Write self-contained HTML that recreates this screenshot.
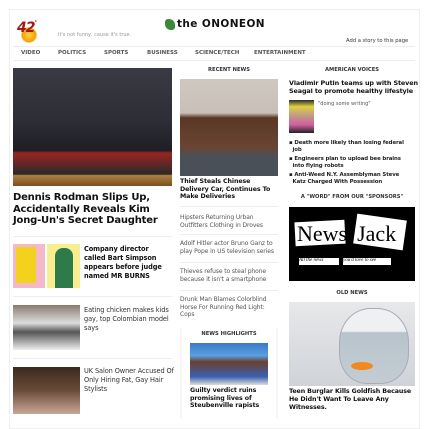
<!DOCTYPE html>
<html><head><meta charset="utf-8"><style>
*{margin:0;padding:0;box-sizing:border-box}
body{width:428px;height:414px;overflow:hidden;background:#fff;font-family:"DejaVu Sans","Liberation Sans",sans-serif;color:#222;position:relative}
.a{position:absolute}
.page{left:9px;top:9px;width:411px;height:420px;border:1px solid #eee}
.nav{font-size:5.5px;font-weight:bold;color:#555;top:50px}
.hd{font-size:5.2px;font-weight:bold;color:#333;text-align:center}
.b{font-weight:bold}
.hr{height:1px;background:#eee}
.sm{font-size:6.6px;line-height:9px;font-weight:bold;letter-spacing:-.1px}
.lt{font-size:6px;line-height:7.6px;color:#555;letter-spacing:-.1px}
</style></head><body>
<div class="a page"></div>
<div class="a" style="left:21px;top:27px;width:16px;height:16px;border-radius:50%;background:radial-gradient(circle,#ffd24a,#f5a000 60%,#fff0 75%)"></div>
<div class="a b" style="left:17px;top:20px;font-size:14px;font-style:italic;color:#a01818;letter-spacing:-1px">42<span style="font-size:5px;vertical-align:top">°</span></div>
<div class="a" style="left:58px;top:32px;font-size:5px;color:#999">It's not funny, cause it's true.</div>
<div class="a" style="left:165px;top:19px;width:10px;height:11px;background:#3a8a3a;border-radius:3px 6px 3px 6px"></div>
<div class="a b" style="left:177px;top:18px;font-size:10.5px;color:#111;letter-spacing:.4px">the ONONEON</div>
<div class="a" style="left:346px;top:38px;font-size:5.2px;color:#333">Add a story to this page</div>
<div class="a hr" style="left:13px;top:46px;width:402px"></div>
<div class="a hr" style="left:13px;top:60px;width:402px"></div>
<div class="a nav" style="left:21px">VIDEO</div>
<div class="a nav" style="left:58px">POLITICS</div>
<div class="a nav" style="left:104px">SPORTS</div>
<div class="a nav" style="left:147px">BUSINESS</div>
<div class="a nav" style="left:195px">SCIENCE/TECH</div>
<div class="a nav" style="left:254px">ENTERTAINMENT</div>
<!-- left -->
<div class="a" style="left:13px;top:68px;width:159px;height:118px;background:linear-gradient(#3a3a44 0%,#2d2d36 45%,#1e1e24 70%,#9b2420 72%,#2a2a2a 90%,#b08040 91%,#7a5020 100%)"></div>
<div class="a b" style="left:13px;top:192px;width:165px;font-size:10px;line-height:11.5px;color:#111;letter-spacing:-.2px">Dennis Rodman Slips Up, Accidentally Reveals Kim Jong-Un's Secret Daughter</div>
<div class="a hr" style="left:13px;top:236px;width:159px"></div>
<div class="a" style="left:13px;top:244px;width:32px;height:44px;background:#f4b8c8"><div class="a" style="left:3px;top:3px;width:20px;height:36px;background:#f2d21c"></div></div>
<div class="a" style="left:47px;top:244px;width:33px;height:44px;background:#f6ee90"><div class="a" style="left:8px;top:4px;width:18px;height:40px;background:#2f7a4a;border-radius:8px 8px 0 0"></div></div>
<div class="a sm" style="left:84px;top:245px;width:86px;color:#111">Company director called Bart Simpson appears before judge named MR BURNS</div>
<div class="a hr" style="left:13px;top:296px;width:159px"></div>
<div class="a" style="left:13px;top:305px;width:67px;height:45px;background:linear-gradient(#8a7a70,#ddd 40%,#555 60%,#eee)"></div>
<div class="a sm" style="left:84px;top:306px;width:92px;font-weight:normal;color:#333">Eating chicken makes kids gay, top Colombian model says</div>
<div class="a hr" style="left:13px;top:358px;width:159px"></div>
<div class="a" style="left:13px;top:367px;width:67px;height:47px;background:linear-gradient(#3a2a20,#6a4a38 50%,#c9a898)"></div>
<div class="a sm" style="left:84px;top:367px;width:92px;font-weight:normal;color:#333">UK Salon Owner Accused Of Only Hiring Fat, Gay Hair Stylists</div>
<!-- middle -->
<div class="a hd" style="left:180px;top:67px;width:98px">RECENT NEWS</div>
<div class="a" style="left:180px;top:79px;width:98px;height:97px;background:linear-gradient(#cfc8c0 0%,#c8bfb8 35%,#5a3826 40%,#6a4432 70%,#4a5058 80%)"></div>
<div class="a sm" style="left:180px;top:178px;width:100px;font-size:6.3px;line-height:7.6px;color:#111">Thief Steals Chinese Delivery Car, Continues To Make Deliveries</div>
<div class="a hr" style="left:180px;top:206px;width:98px"></div>
<div class="a lt" style="left:180px;top:214px;width:100px">Hipsters Returning Urban Outfitters Clothing in Droves</div>
<div class="a hr" style="left:180px;top:234px;width:98px"></div>
<div class="a lt" style="left:180px;top:240px;width:100px">Adolf Hitler actor Bruno Ganz to play Pope in US television series</div>
<div class="a hr" style="left:180px;top:262px;width:98px"></div>
<div class="a lt" style="left:180px;top:268px;width:100px">Thieves refuse to steal phone because it isn't a smartphone</div>
<div class="a hr" style="left:180px;top:290px;width:98px"></div>
<div class="a lt" style="left:180px;top:296px;width:100px">Drunk Man Blames Colorblind Horse For Running Red Light: Cops</div>
<div class="a" style="left:180px;top:328px;width:98px;height:90px;background:#f6f6f6"><div class="a" style="left:2px;top:0;width:94px;height:90px;background:#fff"></div></div>
<div class="a hd" style="left:180px;top:331px;width:98px">NEWS HIGHLIGHTS</div>
<div class="a" style="left:190px;top:343px;width:78px;height:42px;background:linear-gradient(#3a78c8,#5aa0e0 30%,#6a4030 45%,#3a60b0 80%,#ddd)"></div>
<div class="a sm" style="left:190px;top:387px;width:84px;font-size:6.3px;line-height:7.6px;color:#111">Guilty verdict ruins promising lives of Steubenville rapists</div>
<!-- right -->
<div class="a hd" style="left:289px;top:67px;width:126px">AMERICAN VOICES</div>
<div class="a sm" style="left:289px;top:79px;width:130px;font-size:6.4px;line-height:8px;color:#111">Vladimir Putin teams up with Steven Seagal to promote healthy lifestyle</div>
<div class="a" style="left:289px;top:100px;width:25px;height:33px;background:linear-gradient(#2a2a2a,#e0d040 20%,#c0a080 45%,#d060a0 75%,#222)"></div>
<div class="a" style="left:318px;top:101px;font-size:5px;color:#555">"doing some writing"</div>
<div class="a sm" style="left:289px;top:140px;width:130px;font-size:5.4px;line-height:7px;color:#222">▪ Death more likely than losing federal<br>&nbsp;&nbsp;job</div>
<div class="a sm" style="left:289px;top:156px;width:130px;font-size:5.4px;line-height:7px;color:#222">▪ Engineers plan to upload bee brains<br>&nbsp;&nbsp;into flying robots</div>
<div class="a sm" style="left:289px;top:172px;width:130px;font-size:5.4px;line-height:7px;color:#222">▪ Anti-Weed N.Y. Assemblyman Steve<br>&nbsp;&nbsp;Katz Charged With Possession</div>
<div class="a hd" style="left:289px;top:194px;width:126px">A "WORD" FROM OUR "SPONSORS"</div>
<div class="a" style="left:289px;top:207px;width:126px;height:74px;background:#000;overflow:hidden">
<div class="a" style="left:6px;top:14px;width:50px;height:24px;background:#fff;transform:rotate(-3deg)"></div>
<div class="a" style="left:66px;top:10px;width:50px;height:30px;background:#fff;transform:rotate(8deg)"></div>
<div class="a" style="left:8px;top:14px;font-family:'Liberation Serif',serif;font-size:22px;color:#000">News<span style="margin-left:10px">Jack</span></div>
<div class="a" style="left:10px;top:51px;width:40px;height:7px;background:#fff;font-size:5px;font-style:italic;font-family:'Liberation Serif',serif;color:#000">All the news</div>
<div class="a" style="left:54px;top:51px;width:48px;height:7px;background:#fff;font-size:5px;font-style:italic;font-family:'Liberation Serif',serif;color:#000">you'd love to see</div>
</div>
<div class="a hd" style="left:289px;top:290px;width:126px">OLD NEWS</div>
<div class="a" style="left:289px;top:302px;width:126px;height:84px;background:linear-gradient(#e8e8ea,#cfd3d8);overflow:hidden"><div class="a" style="left:50px;top:6px;width:70px;height:76px;border-radius:45% 45% 40% 40%;border:1px solid #aab;background:linear-gradient(#eef0f2 30%,#b8c4cc 32%,#c4ccd2)"></div><div class="a" style="left:62px;top:60px;width:22px;height:8px;background:#f08a20;border-radius:50%"></div></div>
<div class="a sm" style="left:289px;top:388px;width:130px;font-size:6.3px;line-height:8px;color:#111">Teen Burglar Kills Goldfish Because He Didn't Want To Leave Any Witnesses.</div>
</body></html>
